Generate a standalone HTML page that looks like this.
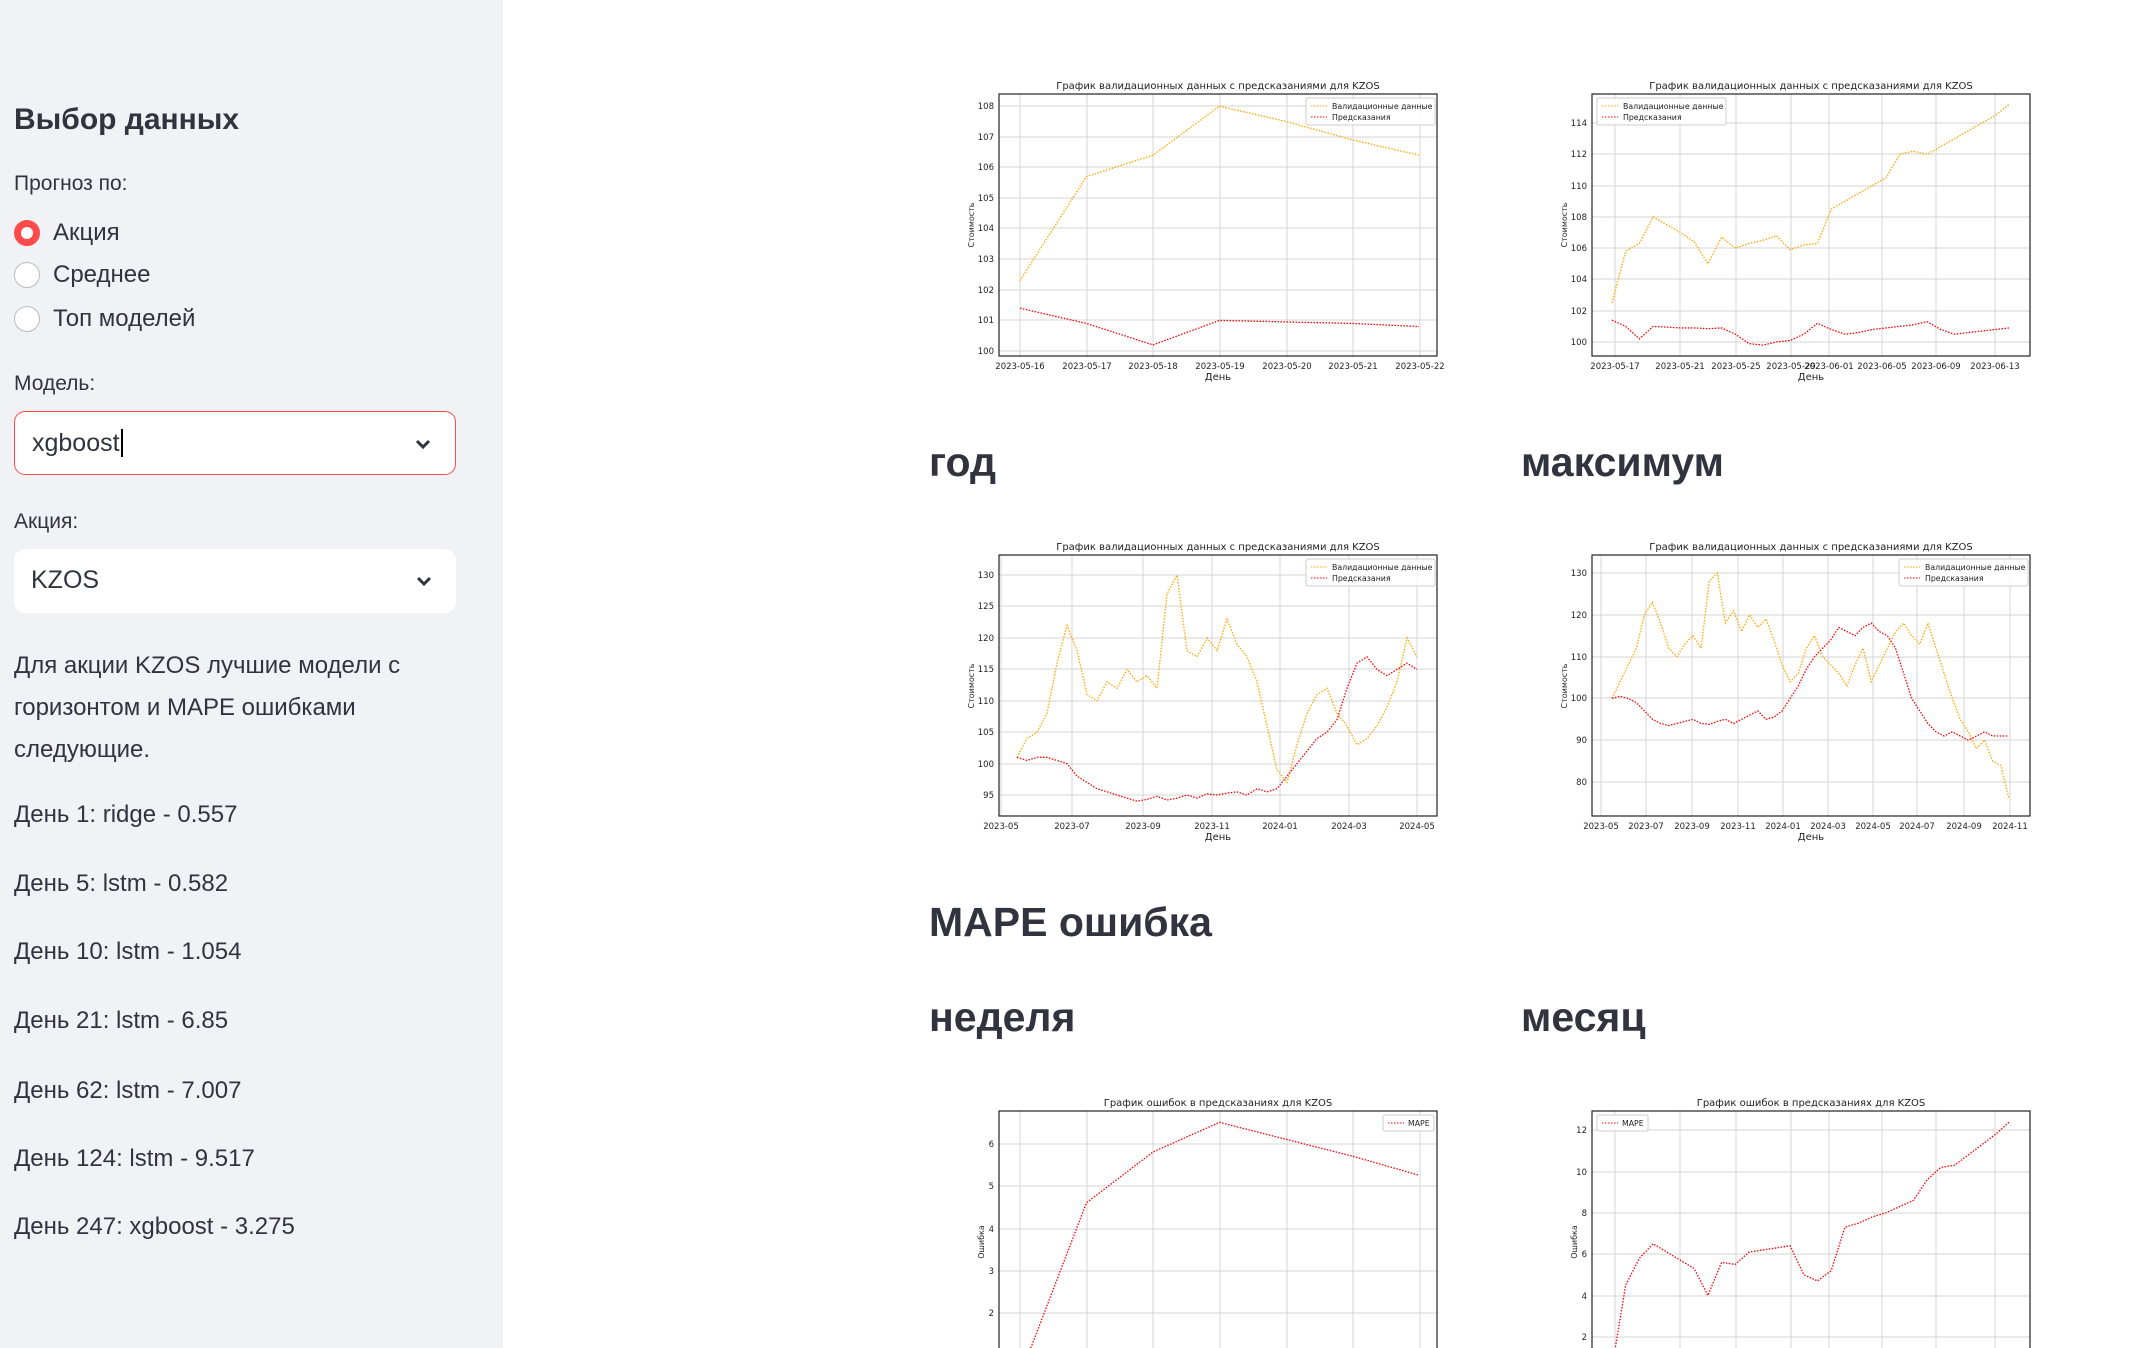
<!DOCTYPE html>
<html><head><meta charset="utf-8"><style>
*{margin:0;padding:0;box-sizing:border-box}
body{width:2131px;height:1348px;overflow:hidden;background:#fff;font-family:"Liberation Sans","DejaVu Sans",sans-serif;color:#31333f;position:relative}
#sb{position:absolute;left:0;top:0;width:503px;height:1348px;background:#f0f2f6}
.a{position:absolute;white-space:nowrap}
.rad{position:absolute;left:14px;width:26px;height:26px;border-radius:50%;border:1.5px solid #bbbcc2;background:#fff}
.sel{position:absolute;left:14px;width:442px;height:64px;border-radius:11px;background:#fff;font-size:25px;padding:17px 0 0 17px}
.chev{position:absolute;right:22px;top:22px}
h2{position:absolute;font-size:41px;font-weight:bold;white-space:nowrap;line-height:1}
</style></head><body>
<div id="sb">
<div class="a" style="left:14px;top:103px;font-size:30px;font-weight:bold">Выбор данных</div>
<div class="a" style="left:14px;top:172px;font-size:21px">Прогноз по:</div>
<div class="rad" style="top:220px;border:7px solid #ff4b4b"></div>
<div class="a" style="left:53px;top:219px;font-size:24px">Акция</div>
<div class="rad" style="top:262px"></div>
<div class="a" style="left:53px;top:261px;font-size:24px">Среднее</div>
<div class="rad" style="top:306px"></div>
<div class="a" style="left:53px;top:305px;font-size:24px">Топ моделей</div>
<div class="a" style="left:14px;top:372px;font-size:21px">Модель:</div>
<div class="sel" style="top:411px;border:1.5px solid #ff4b4b">xgboost<span style="border-left:2px solid #000;margin-left:1px"></span><svg class="chev" width="20" height="20" viewBox="0 0 20 20"><path d="M4 7l6 6 6-6" stroke="#31333f" stroke-width="3" fill="none"/></svg></div>
<div class="a" style="left:14px;top:510px;font-size:21px">Акция:</div>
<div class="sel" style="top:549px">KZOS<svg class="chev" width="20" height="20" viewBox="0 0 20 20"><path d="M4 7l6 6 6-6" stroke="#31333f" stroke-width="3" fill="none"/></svg></div>
<div class="a" style="left:14px;top:645px;font-size:24px;line-height:42px;white-space:normal;width:440px">Для акции KZOS лучшие модели с горизонтом и MAPE ошибками следующие.</div>
<div class="a" style="left:14px;top:801px;font-size:24px">День 1: ridge - 0.557</div>
<div class="a" style="left:14px;top:870px;font-size:24px">День 5: lstm - 0.582</div>
<div class="a" style="left:14px;top:938px;font-size:24px">День 10: lstm - 1.054</div>
<div class="a" style="left:14px;top:1007px;font-size:24px">День 21: lstm - 6.85</div>
<div class="a" style="left:14px;top:1077px;font-size:24px">День 62: lstm - 7.007</div>
<div class="a" style="left:14px;top:1145px;font-size:24px">День 124: lstm - 9.517</div>
<div class="a" style="left:14px;top:1213px;font-size:24px">День 247: xgboost - 3.275</div>
</div>
<h2 style="left:929px;top:442px">год</h2>
<h2 style="left:1521px;top:442px">максимум</h2>
<h2 style="left:929px;top:902px">MAPE ошибка</h2>
<h2 style="left:929px;top:997px">неделя</h2>
<h2 style="left:1521px;top:997px">месяц</h2>

<svg width="2131" height="1348" style="position:absolute;left:0;top:0" font-family="DejaVu Sans, sans-serif" font-size="9" fill="#222">
<defs>
<clipPath id="c1"><rect x="999" y="94" width="438" height="262"/></clipPath>
<clipPath id="c2"><rect x="1592" y="94" width="438" height="262"/></clipPath>
<clipPath id="c3"><rect x="999" y="555" width="438" height="261"/></clipPath>
<clipPath id="c4"><rect x="1592" y="555" width="438" height="261"/></clipPath>
<clipPath id="c5"><rect x="999" y="1111" width="438" height="262"/></clipPath>
<clipPath id="c6"><rect x="1592" y="1111" width="438" height="262"/></clipPath>
</defs>
<g stroke="#d4d4d4" stroke-width="1">
<path d="M1020 94V356M1087 94V356M1153 94V356M1220 94V356M1287 94V356M1353 94V356M1420 94V356M999 106H1437M999 137H1437M999 167H1437M999 198H1437M999 228H1437M999 259H1437M999 290H1437M999 320H1437M999 351H1437"/>
<path d="M1615 94V356M1680 94V356M1736 94V356M1791 94V356M1829 94V356M1882 94V356M1936 94V356M1995 94V356M1592 123H2030M1592 154H2030M1592 186H2030M1592 217H2030M1592 248H2030M1592 279H2030M1592 311H2030M1592 342H2030"/>
<path d="M1001 555V816M1072 555V816M1143 555V816M1212 555V816M1280 555V816M1349 555V816M1417 555V816M999 575H1437M999 606H1437M999 638H1437M999 669H1437M999 701H1437M999 732H1437M999 764H1437M999 795H1437"/>
<path d="M1601 555V816M1646 555V816M1692 555V816M1738 555V816M1783 555V816M1828 555V816M1873 555V816M1917 555V816M1964 555V816M2010 555V816M1592 573H2030M1592 615H2030M1592 657H2030M1592 698H2030M1592 740H2030M1592 782H2030"/>
<path d="M1020 1111V1348M1087 1111V1348M1153 1111V1348M1220 1111V1348M1287 1111V1348M1353 1111V1348M1420 1111V1348M999 1144H1437M999 1186H1437M999 1229H1437M999 1271H1437M999 1313H1437"/>
<path d="M1615 1111V1348M1680 1111V1348M1736 1111V1348M1791 1111V1348M1829 1111V1348M1882 1111V1348M1936 1111V1348M1995 1111V1348M1592 1130H2030M1592 1172H2030M1592 1213H2030M1592 1254H2030M1592 1296H2030M1592 1337H2030"/>
</g>
<g fill="none" stroke="#222" stroke-width="1.2">
<rect x="999" y="94" width="438" height="262"/><rect x="1592" y="94" width="438" height="262"/>
<rect x="999" y="555" width="438" height="261"/><rect x="1592" y="555" width="438" height="261"/>
<rect x="999" y="1111" width="438" height="300"/><rect x="1592" y="1111" width="438" height="300"/>
</g>
<g fill="none" stroke-width="1.3" stroke-dasharray="1.5 1.5">
<g clip-path="url(#c1)">
<polyline vector-effect="non-scaling-stroke" stroke="#ffa500" transform="translate(1020,351) scale(66.5,-30.6) translate(0,-100)" points="0,102.3 1,105.7 2,106.4 3,108 4,107.5 5,106.9 6,106.4"/>
<polyline vector-effect="non-scaling-stroke" stroke="#ff0000" transform="translate(1020,351) scale(66.5,-30.6) translate(0,-100)" points="0,101.4 1,100.9 2,100.2 3,101 4,100.95 5,100.9 6,100.8"/>
</g>
<g clip-path="url(#c2)">
<polyline vector-effect="non-scaling-stroke" stroke="#ffa500" transform="translate(1612,342) scale(13.7,-15.64) translate(0,-100)" points="0,102.5 1,105.8 2,106.3 3,108 4,107.5 5,107 6,106.4 7,105 8,106.7 9,106 10,106.3 11,106.5 12,106.8 13,105.9 14,106.2 15,106.3 16,108.5 17,109 18,109.5 19,110 20,110.5 21,112 22,112.2 23,112 24,112.5 25,113 26,113.5 27,114 28,114.5 29,115.2"/>
<polyline vector-effect="non-scaling-stroke" stroke="#ff0000" transform="translate(1612,342) scale(13.7,-15.64) translate(0,-100)" points="0,101.4 1,101 2,100.2 3,101 4,100.95 5,100.9 6,100.9 7,100.85 8,100.9 9,100.5 10,99.9 11,99.8 12,100 13,100.1 14,100.5 15,101.2 16,100.8 17,100.5 18,100.6 19,100.8 20,100.9 21,101 22,101.1 23,101.3 24,100.8 25,100.5 26,100.6 27,100.7 28,100.8 29,100.9"/>
</g>
<g clip-path="url(#c3)">
<polyline vector-effect="non-scaling-stroke" stroke="#ffa500" transform="translate(1017,795) scale(10,-6.28) translate(0,-95)" points="0,101 1,104 2,105 3,108 4,116 5,122 6,118 7,111 8,110 9,113 10,112 11,115 12,113 13,114 14,112 15,127 16,130 17,118 18,117 19,120 20,118 21,123 22,119 23,117 24,113 25,106 26,99 27,97 28,103 29,108 30,111 31,112 32,108 33,106 34,103 35,104 36,106 37,109 38,113 39,120 40,117"/>
<polyline vector-effect="non-scaling-stroke" stroke="#ff0000" transform="translate(1017,795) scale(10,-6.28) translate(0,-95)" points="0,101 1,100.5 2,101 3,101 4,100.5 5,100 6,98 7,97 8,96 9,95.5 10,95 11,94.5 12,94 13,94.3 14,94.8 15,94.2 16,94.5 17,95 18,94.5 19,95.2 20,95 21,95.3 22,95.5 23,95 24,96 25,95.5 26,96 27,98 28,100 29,102 30,104 31,105 32,107 33,112 34,116 35,117 36,115 37,114 38,115 39,116 40,115"/>
</g>
<g clip-path="url(#c4)">
<polyline vector-effect="non-scaling-stroke" stroke="#ffa500" transform="translate(1612,782) scale(8.1,-4.18) translate(0,-80)" points="0,100 1,104 2,108 3,112 4,120 5,123 6,118 7,112 8,110 9,113 10,115 11,112 12,128 13,130 14,118 15,121 16,116 17,120 18,117 19,119 20,114 21,108 22,104 23,106 24,112 25,115 26,110 27,108 28,106 29,103 30,108 31,112 32,104 33,108 34,112 35,116 36,118 37,115 38,113 39,118 40,112 41,106 42,100 43,95 44,92 45,88 46,90 47,85 48,84 49,76"/>
<polyline vector-effect="non-scaling-stroke" stroke="#ff0000" transform="translate(1612,782) scale(8.1,-4.18) translate(0,-80)" points="0,100 1,100.5 2,100 3,99 4,97 5,95 6,94 7,93.5 8,94 9,94.5 10,95 11,94 12,93.8 13,94.5 14,95 15,94 16,95 17,96 18,97 19,95 20,95.5 21,97 22,100 23,103 24,107 25,110 26,112 27,114 28,117 29,116 30,115 31,117 32,118 33,116 34,115 35,112 36,106 37,100 38,97 39,94 40,92 41,91 42,92 43,91 44,90 45,91 46,92 47,91 48,91 49,91"/>
</g>
<g clip-path="url(#c5)">
<polyline vector-effect="non-scaling-stroke" stroke="#ff0000" transform="translate(1020,1355) scale(66.5,-42.3) translate(0,-1)" points="0,0.5 1,4.6 2,5.8 3,6.5 4,6.1 5,5.7 6,5.25"/>
</g>
<g clip-path="url(#c6)">
<polyline vector-effect="non-scaling-stroke" stroke="#ff0000" transform="translate(1612,1378) scale(13.7,-20.65)" points="0,0.5 1,4.5 2,5.8 3,6.5 4,6.1 5,5.7 6,5.3 7,4 8,5.6 9,5.5 10,6.1 11,6.2 12,6.3 13,6.4 14,5 15,4.7 16,5.2 17,7.3 18,7.5 19,7.8 20,8 21,8.3 22,8.6 23,9.6 24,10.2 25,10.3 26,10.8 27,11.3 28,11.8 29,12.4"/>
</g>
</g>
<g font-size="10" text-anchor="middle">
<text x="1218" y="89">График валидационных данных с предсказаниями для KZOS</text>
<text x="1811" y="89">График валидационных данных с предсказаниями для KZOS</text>
<text x="1218" y="550">График валидационных данных с предсказаниями для KZOS</text>
<text x="1811" y="550">График валидационных данных с предсказаниями для KZOS</text>
<text x="1218" y="1106">График ошибок в предсказаниях для KZOS</text>
<text x="1811" y="1106">График ошибок в предсказаниях для KZOS</text>
<text x="1218" y="380">День</text><text x="1811" y="380">День</text>
<text x="1218" y="840">День</text><text x="1811" y="840">День</text>
</g>
<g font-size="8" text-anchor="middle">
<text transform="translate(974,225) rotate(-90)">Стоимость</text>
<text transform="translate(1567,225) rotate(-90)">Стоимость</text>
<text transform="translate(974,686) rotate(-90)">Стоимость</text>
<text transform="translate(1567,686) rotate(-90)">Стоимость</text>
<text transform="translate(984,1242) rotate(-90)">Ошибка</text>
<text transform="translate(1577,1242) rotate(-90)">Ошибка</text>
</g>
<g font-size="8.5" text-anchor="end">
<text x="994" y="109">108</text><text x="994" y="140">107</text><text x="994" y="170">106</text><text x="994" y="201">105</text><text x="994" y="231">104</text><text x="994" y="262">103</text><text x="994" y="293">102</text><text x="994" y="323">101</text><text x="994" y="354">100</text>
<text x="1587" y="126">114</text><text x="1587" y="157">112</text><text x="1587" y="189">110</text><text x="1587" y="220">108</text><text x="1587" y="251">106</text><text x="1587" y="282">104</text><text x="1587" y="314">102</text><text x="1587" y="345">100</text>
<text x="994" y="578">130</text><text x="994" y="609">125</text><text x="994" y="641">120</text><text x="994" y="672">115</text><text x="994" y="704">110</text><text x="994" y="735">105</text><text x="994" y="767">100</text><text x="994" y="798">95</text>
<text x="1587" y="576">130</text><text x="1587" y="618">120</text><text x="1587" y="660">110</text><text x="1587" y="701">100</text><text x="1587" y="743">90</text><text x="1587" y="785">80</text>
<text x="994" y="1147">6</text><text x="994" y="1189">5</text><text x="994" y="1232">4</text><text x="994" y="1274">3</text><text x="994" y="1316">2</text>
<text x="1587" y="1133">12</text><text x="1587" y="1175">10</text><text x="1587" y="1216">8</text><text x="1587" y="1257">6</text><text x="1587" y="1299">4</text><text x="1587" y="1340">2</text>
</g>
<g font-size="8.5" text-anchor="middle">
<text x="1020" y="369">2023-05-16</text><text x="1087" y="369">2023-05-17</text><text x="1153" y="369">2023-05-18</text><text x="1220" y="369">2023-05-19</text><text x="1287" y="369">2023-05-20</text><text x="1353" y="369">2023-05-21</text><text x="1420" y="369">2023-05-22</text>
<text x="1615" y="369">2023-05-17</text><text x="1680" y="369">2023-05-21</text><text x="1736" y="369">2023-05-25</text><text x="1791" y="369">2023-05-29</text><text x="1829" y="369">2023-06-01</text><text x="1882" y="369">2023-06-05</text><text x="1936" y="369">2023-06-09</text><text x="1995" y="369">2023-06-13</text>
<text x="1001" y="829">2023-05</text><text x="1072" y="829">2023-07</text><text x="1143" y="829">2023-09</text><text x="1212" y="829">2023-11</text><text x="1280" y="829">2024-01</text><text x="1349" y="829">2024-03</text><text x="1417" y="829">2024-05</text>
<text x="1601" y="829">2023-05</text><text x="1646" y="829">2023-07</text><text x="1692" y="829">2023-09</text><text x="1738" y="829">2023-11</text><text x="1783" y="829">2024-01</text><text x="1828" y="829">2024-03</text><text x="1873" y="829">2024-05</text><text x="1917" y="829">2024-07</text><text x="1964" y="829">2024-09</text><text x="2010" y="829">2024-11</text>
</g>
<g font-size="7.8">
<g transform="translate(1306,98)"><rect width="129" height="27" fill="#fff" fill-opacity=".85" stroke="#ccc" rx="2"/><path d="M5 8h16" stroke="#ffa500" stroke-dasharray="1.5 1.5"/><path d="M5 19h16" stroke="red" stroke-dasharray="1.5 1.5"/><text x="26" y="11">Валидационные данные</text><text x="26" y="22">Предсказания</text></g>
<g transform="translate(1597,98)"><rect width="129" height="27" fill="#fff" fill-opacity=".85" stroke="#ccc" rx="2"/><path d="M5 8h16" stroke="#ffa500" stroke-dasharray="1.5 1.5"/><path d="M5 19h16" stroke="red" stroke-dasharray="1.5 1.5"/><text x="26" y="11">Валидационные данные</text><text x="26" y="22">Предсказания</text></g>
<g transform="translate(1306,559)"><rect width="129" height="27" fill="#fff" fill-opacity=".85" stroke="#ccc" rx="2"/><path d="M5 8h16" stroke="#ffa500" stroke-dasharray="1.5 1.5"/><path d="M5 19h16" stroke="red" stroke-dasharray="1.5 1.5"/><text x="26" y="11">Валидационные данные</text><text x="26" y="22">Предсказания</text></g>
<g transform="translate(1899,559)"><rect width="129" height="27" fill="#fff" fill-opacity=".85" stroke="#ccc" rx="2"/><path d="M5 8h16" stroke="#ffa500" stroke-dasharray="1.5 1.5"/><path d="M5 19h16" stroke="red" stroke-dasharray="1.5 1.5"/><text x="26" y="11">Валидационные данные</text><text x="26" y="22">Предсказания</text></g>
<g transform="translate(1383,1115)"><rect width="51" height="16" fill="#fff" stroke="#ccc" rx="2"/><path d="M5 8h16" stroke="red" stroke-dasharray="1.5 1.5"/><text x="25" y="11">MAPE</text></g>
<g transform="translate(1597,1115)"><rect width="51" height="16" fill="#fff" stroke="#ccc" rx="2"/><path d="M5 8h16" stroke="red" stroke-dasharray="1.5 1.5"/><text x="25" y="11">MAPE</text></g>
</g>
</svg>
</body></html>
